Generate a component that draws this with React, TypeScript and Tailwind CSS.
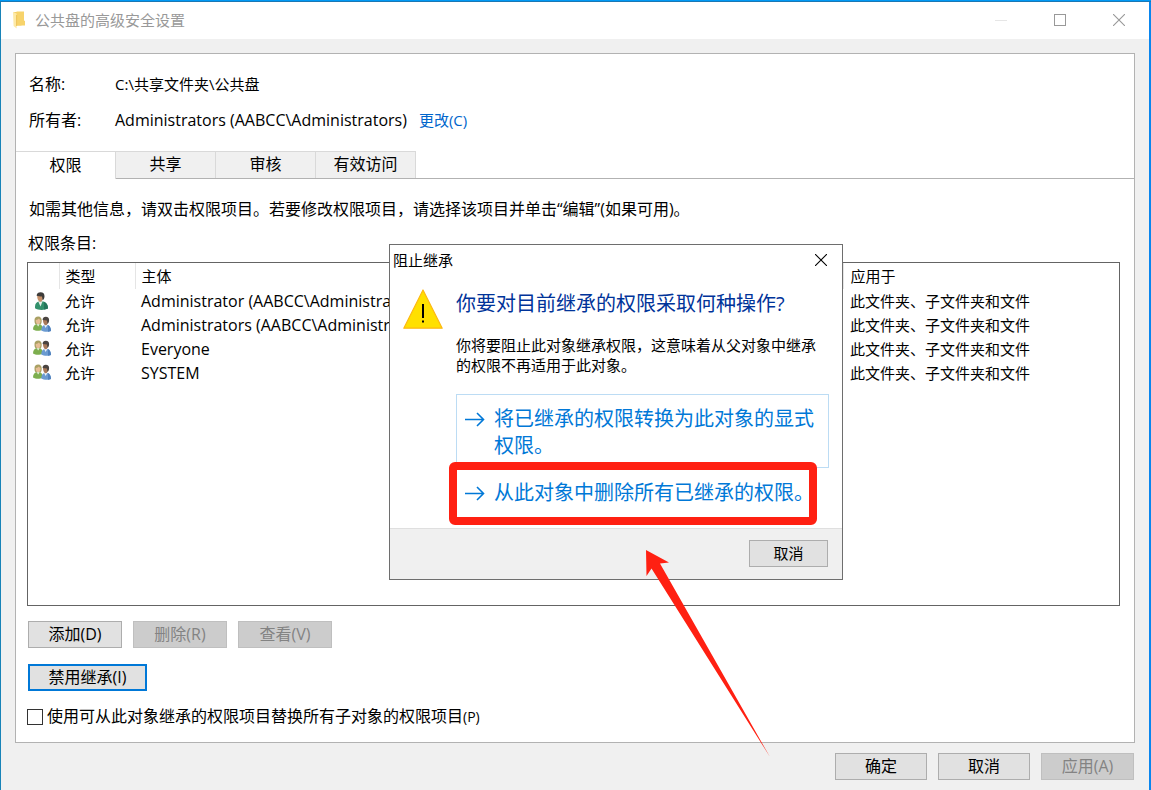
import { useState } from 'react';
import type { ReactNode } from 'react';

interface PermissionEntry {
  id: number;
  kind: 'user' | 'group';
  access: string;
  principal: string;
  appliesTo: string;
}

const tabs = ['权限', '共享', '审核', '有效访问'];

const entries: PermissionEntry[] = [
  { id: 1, kind: 'user', access: '允许', principal: 'Administrator (AABCC\\Administra...', appliesTo: '此文件夹、子文件夹和文件' },
  { id: 2, kind: 'group', access: '允许', principal: 'Administrators (AABCC\\Administr...', appliesTo: '此文件夹、子文件夹和文件' },
  { id: 3, kind: 'group', access: '允许', principal: 'Everyone', appliesTo: '此文件夹、子文件夹和文件' },
  { id: 4, kind: 'group', access: '允许', principal: 'SYSTEM', appliesTo: '此文件夹、子文件夹和文件' },
];

function FolderIcon() {
  return (
    <svg className="w-3 h-[18px]" viewBox="0 0 12 18" aria-hidden="true">
      <path d="M1 1h6.500l1 1v12.500H1z" fill="#f3cd66" />
      <path d="M3.500.5h7.500v9l1 .5v4.500H3.500z" fill="#f7d36b" />
      <path d="M0 .8l3.600 1.700V17.500L.6 15z" fill="#fde9a6" />
      <path d="M3.600 4v11" stroke="#e9bb4c" strokeWidth=".8" />
    </svg>
  );
}

function UserIcon() {
  return (
    <svg className="w-[18px] h-[18px]" viewBox="0 0 18 18" aria-hidden="true">
      <path d="M2 14.500c0-3 1.800-4.700 4-5h4.500c2.700.5 4.500 3 4.500 7-3 1.900-10 2-13-.2z" fill="#33916c" />
      <path d="M11 10c2.500.8 4 3.200 4 6.500l-4 1z" fill="#24755a" />
      <path d="M5.300 9.500l2.200 5 2-5z" fill="#e5efe9" />
      <path d="M4.200 4c0-2 1.300-3 3-3 2 0 3 1.500 2.800 4-.2 3-1.200 4.800-2.500 4.800C5.600 9.800 4.200 7 4.200 4z" fill="#c69068" />
      <path d="M3.600 3.800C3.700 1.200 5.500.2 7.500.2c2.700 0 4.200 1.600 4 4.200-.1 2-.9 3.300-1.900 3.900L9 4.600C7.500 4.500 5 4.200 3.600 3.800z" fill="#3e3c3a" />
    </svg>
  );
}

function GroupIcon() {
  return (
    <svg className="w-[18px] h-[18px]" viewBox="0 0 18 18" aria-hidden="true">
      <path d="M1.500 4.500C1.300 1.800 3 .5 5.200.5c2.300 0 3.600 1.700 3.500 4.200 0 2-.4 3.300-1.400 4L2.500 8.300C1.800 7.500 1.500 6 1.500 4.500z" fill="#a9a063" />
      <path d="M2.700 4c1.300.1 2.500-.5 3.200-1.400.5.900 1 1.400 1.700 1.600 0 2.300-1 4.200-2.400 4.200S2.600 6.500 2.700 4z" fill="#e6bd95" />
      <path d="M0 13.500C0 10.500 1.300 8.800 3.500 8.300h3.200c1.800.5 3 2 3 5.200-2.700 1.700-7 1.700-9.700 0z" fill="#7dae4e" />
      <path d="M3.800 8.300l1.300 2.200 1.500-2.200z" fill="#eff3e8" />
      <path d="M8.200 14.500c0-3.300 1.400-5.300 3.400-5.600h2.900c2 .4 3.500 2.700 3.500 6-2.700 1.300-7.100 1.300-9.800-.4z" fill="#6b9bd1" />
      <path d="M15 9c1.900.8 3 3 3 6l-3 .7z" fill="#4f80bd" />
      <path d="M11.100 8.900l1.500 3 1.700-3z" fill="#eef3f8" />
      <path d="M10 4.400c0-2 1-3.200 2.800-3.200S15.300 2.600 15.200 5c-.1 2.400-1.100 4.200-2.400 4.200S10 7 10 4.400z" fill="#a87959" />
      <path d="M9.600 4C9.600 1.800 11 .8 12.800.8c2.300 0 3.400 1.400 3.300 3.500-.1 1.800-.6 2.900-1.500 3.600l-.7-3.400z" fill="#4a4441" />
    </svg>
  );
}

function WarningIcon() {
  return (
    <svg className="w-10 h-10 shrink-0" viewBox="0 0 40 40" aria-hidden="true">
      <path d="M20 1L39.200 39.200H.8z" fill="#ffe000" stroke="#fdb813" strokeWidth="1.200" strokeLinejoin="round" />
      <path d="M19 15h2v14h-2zM19 31.500h2v2h-2z" fill="#000" />
    </svg>
  );
}

function LinkArrow() {
  return (
    <svg className="w-5 h-[27px] shrink-0" viewBox="0 0 20 27" fill="none" stroke="#0078d7" strokeWidth="1.600" aria-hidden="true">
      <path d="M0 14.500H18.500M12 8l6.500 6.500-6.500 6.500" />
    </svg>
  );
}

function CloseIcon() {
  return (
    <svg className="w-3 h-3" viewBox="0 0 12 12" stroke="currentColor" strokeWidth="1.100" aria-hidden="true">
      <path d="M0 0l12 12M12 0L0 12" />
    </svg>
  );
}

function Button({ children, className, disabled }: { children: ReactNode; className: string; disabled?: boolean }) {
  return (
    <button
      type="button"
      disabled={disabled}
      className={`h-[27px] pb-px flex items-center justify-center ${className} ${
        disabled ? 'bg-[#cccccc] border border-[#bfbfbf] text-[#838383]' : 'bg-[#e1e1e1]'
      }`}
    >
      {children}
    </button>
  );
}

function InheritanceDialog() {
  return (
    <div
      role="dialog"
      aria-labelledby="dialog-title"
      className="absolute left-[388px] top-[244px] w-[454px] bg-white border border-[#6e6e6e] text-[15px]"
    >
      <div className="h-[30px] flex items-center justify-between pl-[3px]">
        <span id="dialog-title">阻止继承</span>
        <button type="button" aria-label="关闭" className="w-[42px] h-full flex items-center justify-center">
          <CloseIcon />
        </button>
      </div>

      <div className="flex gap-[13px] px-[13px] pt-[14px] pb-[11px]">
        <WarningIcon />
        <div className="flex-1">
          <h2 className="pt-px text-xl leading-7 text-[#003399]">你要对目前继承的权限采取何种操作?</h2>
          <p className="mt-[17px] leading-5">
            你将要阻止此对象继承权限，这意味着从父对象中继承的权限不再适用于此对象。
          </p>
          <button
            type="button"
            className="mt-[19px] w-full flex gap-[9px] border border-[#bcdcf4] px-2 pt-[10px] pb-2 text-xl leading-[27px] text-left text-[#0078d7]"
          >
            <LinkArrow />
            <span>将已继承的权限转换为此对象的显式权限。</span>
          </button>
          <div className="relative">
            <button
              type="button"
              className="w-full flex gap-[9px] border border-transparent px-2 py-[10px] text-xl leading-[27px] text-left text-[#0078d7]"
            >
              <LinkArrow />
              <span>从此对象中删除所有已继承的权限。</span>
            </button>
            {/* Highlight around the option to choose */}
            <div className="absolute -left-[7px] -top-[6px] right-3 -bottom-[8px] border-8 border-[#ff2012] rounded-md pointer-events-none" />
          </div>
        </div>
      </div>

      <div className="flex justify-end bg-[#f0f0f0] border-t border-[#dfdfdf] pt-[11px] pb-3 pr-[14px]">
        <Button className="w-[79px] border border-[#adadad]">取消</Button>
      </div>
    </div>
  );
}

export default function App() {
  const [activeTab, setActiveTab] = useState('权限');
  const [replaceAll, setReplaceAll] = useState(false);

  return (
    <div className="relative min-h-screen flex flex-col bg-[#f0f0f0] border-l border-l-[#1883b8] text-base text-black font-['Open_Sans','Noto_Sans_CJK_SC',sans-serif]">
      <div className="h-0.5 -ml-px bg-[#0099f5] border-b border-[#1a78b5]" />
      <div className="flex-1 flex flex-col border-r-2 border-[#0a86ee]">
        {/* Title bar */}
        <div className="h-[37px] pb-px pr-px flex items-center bg-white pl-3 text-[#999999]">
          <FolderIcon />
          <h1 className="ml-[10px] text-[15px]">公共盘的高级安全设置</h1>
          <div className="ml-auto h-full flex">
            <button type="button" aria-label="最小化" disabled className="w-[59px] h-full flex items-center justify-center">
              <span className="w-3 h-px bg-[#e6e6e6]" />
            </button>
            <button type="button" aria-label="最大化" className="w-[59px] h-full flex items-center justify-center">
              <span className="w-3 h-3 border border-[#999999]" />
            </button>
            <button type="button" aria-label="关闭" className="w-[59px] h-full flex items-center justify-center">
              <CloseIcon />
            </button>
          </div>
        </div>

        <div className="flex-1 flex flex-col px-[14px] pt-[14px] pb-[10px]">
          <div className="flex-1 flex flex-col bg-white border border-[#b2b2b2]">
            <dl className="pt-3 pl-[13px]">
              <div className="h-9 flex items-center">
                <dt className="w-[86px]">名称:</dt>
                <dd className="text-[15px]">C:\共享文件夹\公共盘</dd>
              </div>
              <div className="h-9 flex items-center">
                <dt className="w-[86px]">所有者:</dt>
                <dd className="flex items-center gap-3">
                  <span>Administrators (AABCC\Administrators)</span>
                  <a href="#" className="text-[15px] text-[#0066cc]">更改(C)</a>
                </dd>
              </div>
            </dl>

            <div role="tablist" className="mt-[13px] flex">
              {tabs.map((tab) => (
                <button
                  key={tab}
                  type="button"
                  role="tab"
                  aria-selected={activeTab === tab}
                  onClick={() => setActiveTab(tab)}
                  className={`w-[100px] pb-0.5 flex items-center justify-center border-t border-r border-[#d9d9d9] ${
                    activeTab === tab ? 'h-7 -mb-px bg-white relative' : 'h-[27px] bg-[#f0f0f0]'
                  }`}
                >
                  {tab}
                </button>
              ))}
            </div>

            <div className="flex-1 flex flex-col border-t border-[#b2b2b2] px-[11px] pt-[18px] pb-[13px]">
              <p className="h-6 leading-6 pl-0.5">
                如需其他信息，请双击权限项目。若要修改权限项目，请选择该项目并单击“编辑”(如果可用)。
              </p>
              <p className="mt-[10px] h-6 leading-6 pl-px">权限条目:</p>

              {/* Permission entries */}
              <div className="mt-[7px] flex-1 mr-[3px] border border-[#646464] text-[15px]">
                <table className="w-full table-fixed text-left">
                  <colgroup>
                    <col className="w-[31px]" />
                    <col className="w-[76px]" />
                    <col className="w-[290px]" />
                    <col className="w-[418px]" />
                    <col />
                  </colgroup>
                  <thead>
                    <tr className="h-[26px]">
                      <th className="border-r border-[#e5e5e5]" />
                      <th className="border-r border-[#e5e5e5] pl-[6px] font-normal">类型</th>
                      <th className="border-r border-[#e5e5e5] pl-[6px] font-normal">主体</th>
                      <th className="border-r border-[#e5e5e5]" />
                      <th className="pl-[7px] font-normal">应用于</th>
                    </tr>
                  </thead>
                  <tbody>
                    {entries.map((entry) => (
                      <tr key={entry.id} className="h-6">
                        <td className="pl-[5px]">{entry.kind === 'user' ? <UserIcon /> : <GroupIcon />}</td>
                        <td className="pl-[6px]">{entry.access}</td>
                        <td className="pl-[6px] whitespace-nowrap text-base leading-5">{entry.principal}</td>
                        <td />
                        <td className="pl-[7px] truncate">{entry.appliesTo}</td>
                      </tr>
                    ))}
                  </tbody>
                </table>
              </div>

              <div className="mt-[15px] ml-px flex gap-[11px]">
                <Button className="w-[94px] border border-[#adadad]">添加(D)</Button>
                <Button className="w-[94px]" disabled>删除(R)</Button>
                <Button className="w-[94px]" disabled>查看(V)</Button>
              </div>
              <div className="mt-4 ml-px flex">
                <Button className="w-[119px] border-2 border-[#0078d7]">禁用继承(I)</Button>
              </div>
              <label className="mt-[14px] h-6 flex items-center gap-1">
                <input
                  type="checkbox"
                  checked={replaceAll}
                  onChange={(e) => setReplaceAll(e.target.checked)}
                  className="appearance-none w-4 h-4 border border-[#333333] bg-white checked:bg-[#0078d7]"
                />
                <span className="pb-0.5">
                  使用可从此对象继承的权限项目替换所有子对象的权限项目<span className="text-sm">(P)</span>
                </span>
              </label>
            </div>
          </div>

          <div className="mt-[10px] pr-px flex justify-end gap-[11px]">
            <Button className="w-[92px] border border-[#adadad]">确定</Button>
            <Button className="w-[92px] border border-[#adadad]">取消</Button>
            <Button className="w-[93px]" disabled>应用(A)</Button>
          </div>
        </div>
      </div>

      <InheritanceDialog />

      {/* Pointer arrow */}
      <svg className="absolute left-[644px] top-[549px] w-[126px] h-[210px] pointer-events-none" viewBox="0 0 126 210" aria-hidden="true">
        <path d="M1 1L24 13.500L15 14.500L125 208L6.500 19.500L1.500 27z" fill="#ff2012" />
      </svg>
    </div>
  );
}
